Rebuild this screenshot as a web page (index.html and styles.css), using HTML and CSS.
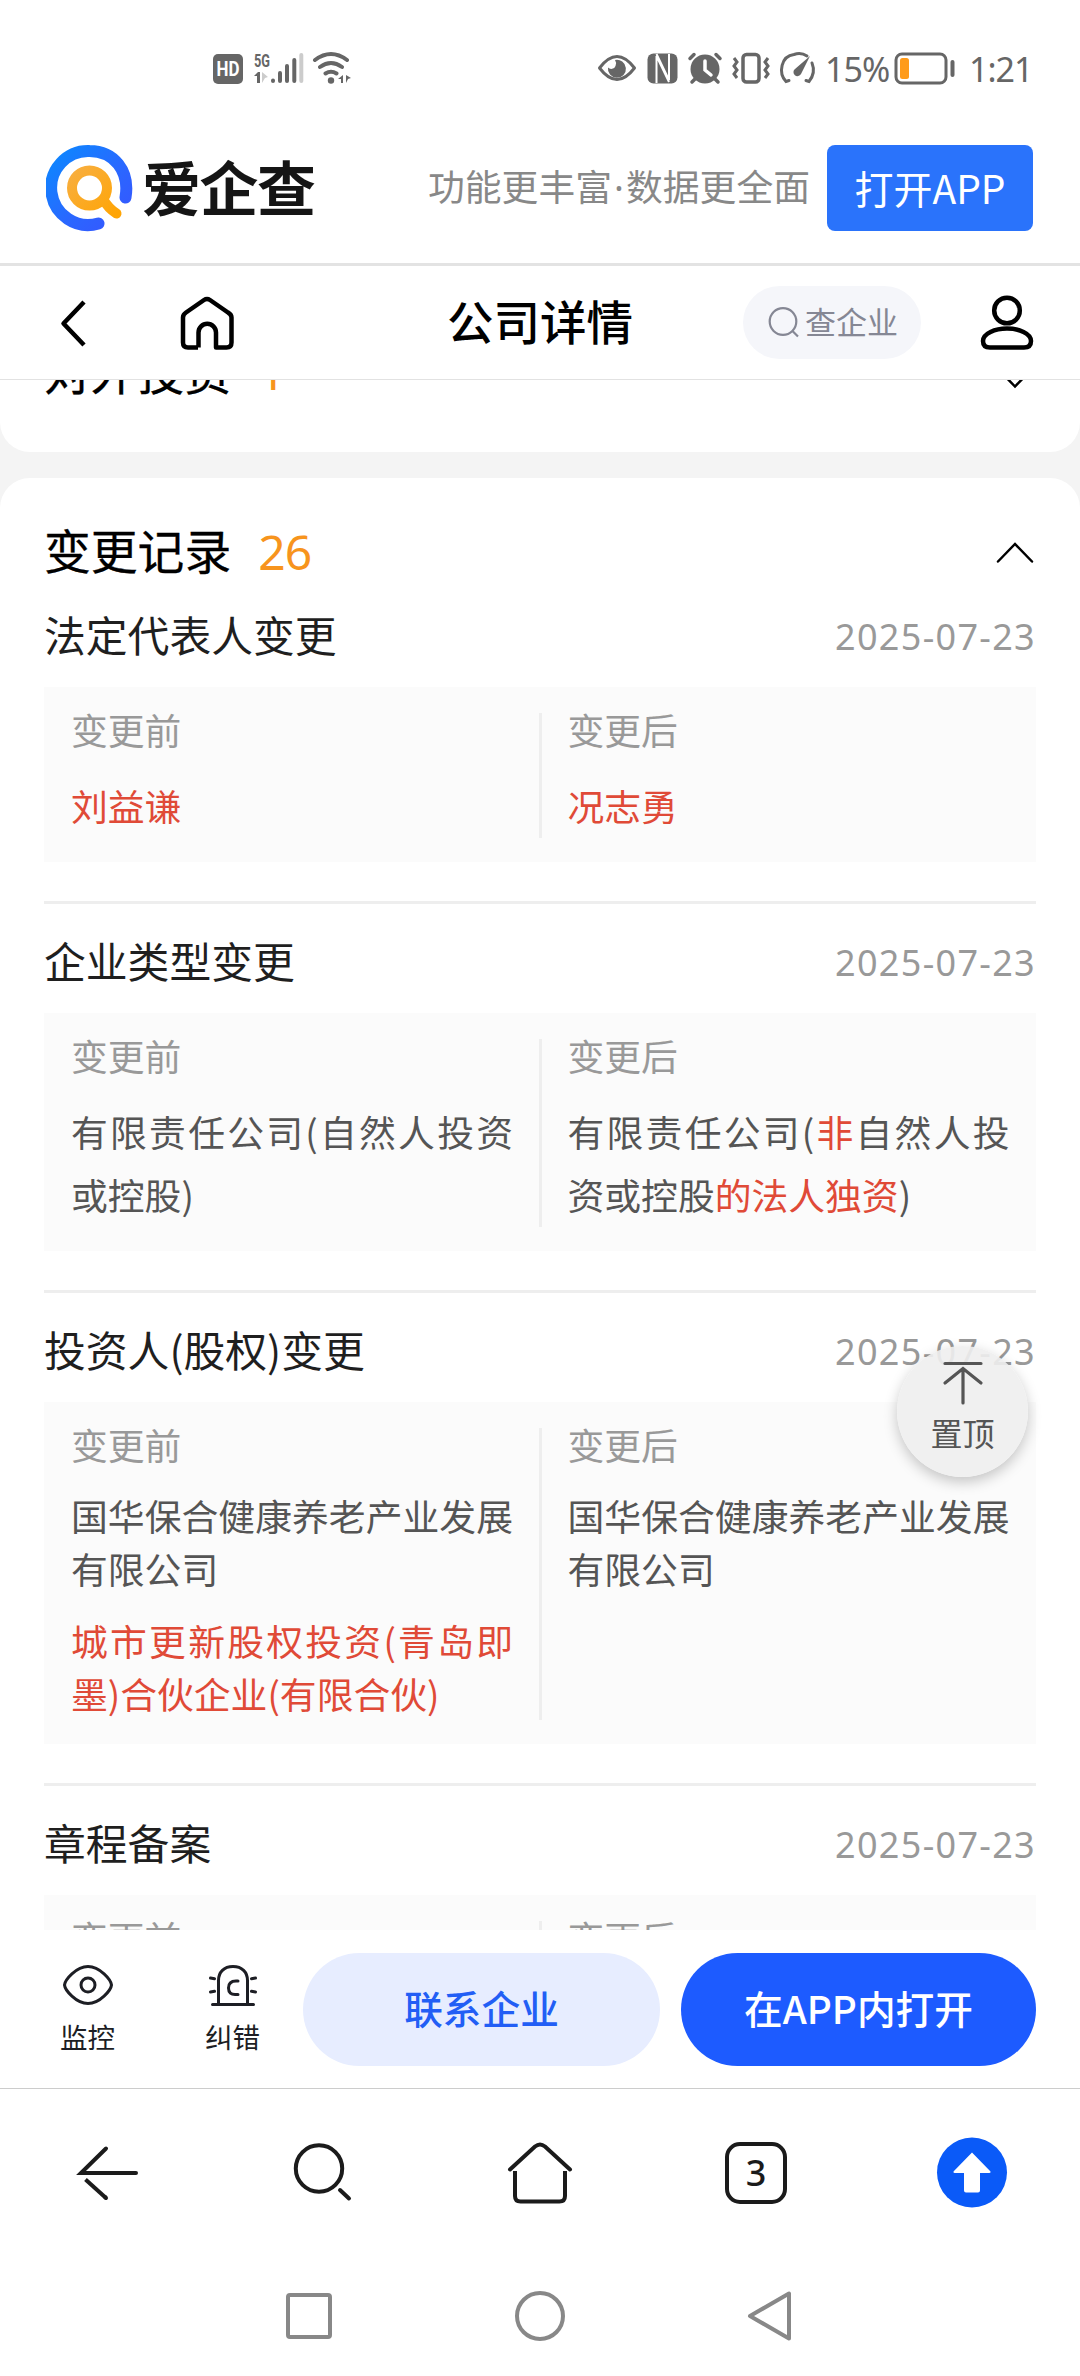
FILE: index.html
```html
<!DOCTYPE html>
<html lang="zh-CN">
<head>
<meta charset="utf-8">
<title>公司详情</title>
<link rel="stylesheet" href="styles.css">
</head>
<body>
<div class="screen">
  <header class="status">
    <svg class="status-left" width="144" height="40" viewBox="210 48 144 40">
      <rect x="213" y="54" width="30" height="30" rx="5" fill="#666"/>
      <text x="228" y="76" class="hd" text-anchor="middle" textLength="23" lengthAdjust="spacingAndGlyphs">HD</text>
      <text x="254" y="66.5" class="fiveg" textLength="16" lengthAdjust="spacingAndGlyphs">5G</text>
      <path d="M254 76l4-4h2v11h-3v-7z" fill="#666"/>
      <path d="M262 72l6 5-3 1-3 5z" fill="#ccc"/>
      <g stroke-width="4" stroke-linecap="round" stroke="#666"><path d="M273 80.5v.5M280 73v8M287 66v15M294.300 60v21"/><path d="M301.300 55v26" stroke="#ccc"/></g>
      <g fill="none" stroke="#666" stroke-width="4" stroke-linecap="round"><path d="M315 60Q331 48 347 60M320 67Q331 59 342 67M325.500 73.500Q331 70 336.500 73.500"/></g>
      <circle cx="331" cy="80.500" r="3.200" fill="#666"/>
      <path d="M338 79l5-4v8h-2v-4zM346 75l5 3-3 1-2 4z" fill="#666"/>
    </svg>
    <svg class="status-icons" width="222" height="40" viewBox="597 48 222 40" fill="none" stroke="#666">
      <path d="M600.500 68Q618 45 635.500 68Q618 91 600.500 68z" stroke-width="3" stroke-linejoin="round"/>
      <path d="M616 60a9 9 0 1 1-7 7.500a4.500 4.500 0 0 0 7.500-1.500a6 6 0 0 0-.5-6z" fill="#666" stroke="none"/>
      <rect x="648.500" y="53.500" width="30" height="30" rx="6" fill="#666" stroke="none"/>
      <path d="M657.500 83V56L670 82" stroke="#fff" stroke-width="2"/>
      <path d="M657.500 54L670 80V54" stroke="#fff" stroke-width="2"/>
      <circle cx="706" cy="69" r="14.500" fill="#666" stroke="none"/>
      <path d="M706 61v9l6 5" stroke="#fff" stroke-width="3.500" stroke-linecap="round"/>
      <path d="M691 58.500l4-4M717 54.500l4 4M697 78l-4 4M715 78l4 4" stroke-width="3.500" stroke-linecap="round"/>
      <rect x="744" y="54.500" width="16" height="27.500" rx="3.500" stroke-width="3.500"/>
      <path d="M735 58l3 4-3 4 3 4-3 4 3 4M769 58l-3 4 3 4-3 4 3 4-3 4" stroke-width="3"/>
      <path d="M790 80.500l-3 1C779 73 782 56 795 54.500Q802 52 808 56M813 63Q817 73 810 81.500l-3-1" stroke-width="3" stroke-linecap="round"/>
      <path d="M811 56L796 69a4 4 0 1 0 6 5z" fill="#666" stroke="none"/>
    </svg>
    <span class="status-text">15%</span>
    <svg class="battery" width="64" height="34" viewBox="894 51 64 34">
      <rect x="897" y="54" width="50" height="29" rx="6" fill="none" stroke="#666" stroke-width="3"/>
      <rect x="901" y="58" width="9" height="21" rx="2.500" fill="#ff9b1a"/>
      <rect x="951.500" y="60" width="4" height="17" rx="2" fill="#666"/>
    </svg>
    <span class="status-text">1:21</span>
  </header>

  <section class="promo">
    <svg class="logo" width="88" height="88" viewBox="0 0 88 88">
      <defs><linearGradient id="ring" x1="0" y1="0" x2="1" y2="1"><stop offset="0" stop-color="#0c88ff"/><stop offset=".6" stop-color="#2b66ff"/><stop offset="1" stop-color="#3656ff"/></linearGradient>
      <linearGradient id="lens" x1="0" y1="0" x2="1" y2="1"><stop offset="0" stop-color="#f8ae3e"/><stop offset="1" stop-color="#ffa505"/></linearGradient></defs>
      <path d="M79.500 53.500C84 27 68 7 43.500 7A37 37 0 1 0 52.500 79.500" fill="none" stroke="url(#ring)" stroke-width="12" stroke-linecap="round"/>
      <path d="M43.500 26.500a17.500 17.500 0 1 0 0 35a17.500 17.500 0 1 0 0-35M57 55Q62 64 70.500 69.500" fill="none" stroke="url(#lens)" stroke-width="10" stroke-linecap="round"/>
    </svg>
    <span class="brand">爱企查</span>
    <span class="slogan">功能更丰富<i class="dot">·</i>数据更全面</span>
    <a class="open-btn">打开APP</a>
  </section>

  <nav class="topnav">
    <svg class="back" width="32" height="52" viewBox="0 0 32 52" fill="none" stroke="#000" stroke-width="4.500" stroke-linejoin="round"><path d="M24 5L3.500 26.500L24 48"/></svg>
    <svg class="house" width="56" height="56" viewBox="0 0 56 56" fill="none" stroke="#000" stroke-width="4.500" stroke-linejoin="round"><path d="M19 52.500H9Q4 52.500 4 47.500V22.500Q4 19.500 7 17.500L25 5Q28 3 31 5L49 17.500Q52.500 19.500 52.500 22.500V47.500Q52.500 52.500 47.500 52.500H37V37.500A8.700 8.700 0 0 0 19.500 37.500V52.500"/></svg>
    <h1 class="title">公司详情</h1>
    <div class="search"><svg width="32" height="32" viewBox="0 0 32 32" fill="none" stroke="#858794" stroke-width="2.200"><circle cx="15" cy="14.500" r="13.300"/><path d="M24 23.500l6 6"/></svg><span>查企业</span></div>
    <svg class="user" width="54" height="56" viewBox="0 0 54 56" fill="none" stroke="#000" stroke-width="4.500"><circle cx="27" cy="15.500" r="12.800"/><path d="M27 33.500C15 33.500 3 38.500 3 46Q3 52.500 10 52.500H44Q51 52.500 51 46C51 38.500 39 33.500 27 33.500z"/></svg>
  </nav>

  <main class="content">
    <section class="card card-invest">
      <div class="card-head"><h2>对外投资</h2><em>1</em>
        <svg class="chev" width="38" height="22" viewBox="0 0 38 22" fill="none" stroke="#000" stroke-width="2.500" stroke-linecap="round"><path d="M2 2L19 19.500L36 2"/></svg></div>
    </section>
    <section class="card card-changes">
      <div class="card-head"><h2>变更记录</h2><em>26</em>
        <svg class="chev" width="38" height="22" viewBox="0 0 38 22" fill="none" stroke="#000" stroke-width="2.500" stroke-linecap="round"><path d="M2 19.500L19 2L36 19.500"/></svg></div>

      <article class="record">
        <div class="record-head"><h3>法定代表人变更</h3><time>2025-07-23</time></div>
        <div class="diff">
          <div class="side"><div class="label">变更前</div><p><b>刘益谦</b></p></div>
          <div class="side"><div class="label">变更后</div><p><b>况志勇</b></p></div>
        </div>
      </article>
      <article class="record">
        <div class="record-head"><h3>企业类型变更</h3><time>2025-07-23</time></div>
        <div class="diff">
          <div class="side"><div class="label">变更前</div><p>有限责任公司(自然人投资或控股)</p></div>
          <div class="side"><div class="label">变更后</div><p>有限责任公司(<b>非</b>自然人投资或控股<b>的法人独资</b>)</p></div>
        </div>
      </article>
      <article class="record">
        <div class="record-head"><h3>投资人(股权)变更</h3><time>2025-07-23</time></div>
        <div class="diff tight">
          <div class="side"><div class="label">变更前</div><p>国华保合健康养老产业发展有限公司</p><p><b>城市更新股权投资(青岛即墨)合伙企业(有限合伙)</b></p></div>
          <div class="side"><div class="label">变更后</div><p>国华保合健康养老产业发展有限公司</p></div>
        </div>
      </article>
      <article class="record">
        <div class="record-head"><h3>章程备案</h3><time>2025-07-23</time></div>
        <div class="diff">
          <div class="side"><div class="label">变更前</div></div>
          <div class="side"><div class="label">变更后</div></div>
        </div>
      </article>
    </section>
  </main>

  <section class="actions">
    <div class="act"><svg width="52" height="44" viewBox="0 0 52 44" fill="none" stroke="#1d1e24" stroke-width="3"><path d="M2.500 22C3 17 14 3.500 26 3.500S49 17 49.500 22C49 27 38 40.500 26 40.500S3 27 2.500 22z" stroke-linejoin="round"/><circle cx="26" cy="22" r="7"/></svg><span>监控</span></div>
    <div class="act"><svg width="52" height="44" viewBox="0 0 52 44" fill="none" stroke="#1d1e24" stroke-width="3" stroke-linecap="round"><path d="M11.500 41V17.500C11.500 9 17 3.500 26 3.500S40.500 9 40.500 17.500V41M5.500 41.500H46.500M31 18H29Q21.500 18 21.500 25T29 31.500H31M3.500 15l4 .7M3.500 29l4-.7M48.500 15l-4 .7M48.500 29l-4-.7"/></svg><span>纠错</span></div>
    <a class="pill pill-light">联系企业</a>
    <a class="pill pill-solid">在APP内打开</a>
  </section>

  <nav class="browser">
    <svg width="72" height="72" viewBox="0 0 72 72" fill="none" stroke="#1b1b1b" stroke-width="4" stroke-linecap="round"><path d="M34 11.500L9 36H64"/><path d="M13.500 42.500L34 61" stroke-linecap="butt"/><path d="M33 60L34 61"/></svg>
    <svg width="72" height="72" viewBox="0 0 72 72" fill="none" stroke="#1b1b1b" stroke-width="4" stroke-linecap="round"><circle cx="31" cy="31.500" r="23.200"/><path d="M52 53L61 61.500"/></svg>
    <svg width="72" height="72" viewBox="0 0 72 72" fill="none" stroke="#1b1b1b" stroke-width="4" stroke-linecap="round"><path d="M6 32.500L31 9.500Q36 5.500 41 9.500L66 32.500"/><path d="M11 34V59Q11 64.500 16.500 64.500H55.500Q61 64.500 61 59V34" stroke-linecap="butt"/></svg>
    <span class="tab-slot"><span class="tabs">3</span></span>
    <svg width="72" height="72" viewBox="0 0 72 72"><circle cx="36" cy="35.500" r="35" fill="#0a5af8"/><path d="M36 15.500L54.500 34.500Q55 36 53 36H44V53.500Q44 55.500 42 55.500H30Q28 55.500 28 53.500V36H19Q17 36 17.500 34.500z" fill="#fff"/></svg>
  </nav>

  <nav class="system">
    <svg width="56" height="56" viewBox="0 0 56 56" fill="none" stroke="#888" stroke-width="4"><rect x="7" y="7" width="42" height="42" rx="2"/></svg>
    <svg width="56" height="56" viewBox="0 0 56 56" fill="none" stroke="#888" stroke-width="4"><circle cx="28" cy="28" r="23"/></svg>
    <svg width="56" height="56" viewBox="0 0 56 56" fill="none" stroke="#888" stroke-width="4" stroke-linejoin="round"><path d="M7 28L46 5.500V50.500z"/></svg>
  </nav>

  <a class="to-top">
    <svg width="44" height="46" viewBox="0 0 44 46" fill="none" stroke="#555" stroke-width="3.200" stroke-linecap="round"><path d="M4 3.500H40M4 23L22 8.500L40 23M22 8.500V43"/></svg>
    <span>置顶</span>
  </a>
</div>
</body>
</html>
```
FILE: styles.css
```css
* { box-sizing: border-box; margin: 0; padding: 0; }
body {
  font-family: "Noto Sans CJK SC", sans-serif;
  background: #fff;
  color: #000;
}
svg { display: block; flex: none; }
.screen {
  position: relative;
  width: 1080px;
  height: 2376px;
  display: flex;
  flex-direction: column;
  overflow: hidden;
}

/* status bar */
.status { height: 136px; flex: none; display: flex; align-items: center; padding: 0 51px 0 210px; }
.status-icons { margin-left: auto; }
.status-text { font: 34px/40px "Noto Sans", sans-serif; color: #666; padding-top: 2px; letter-spacing: -1px; white-space: nowrap; }
.status-icons + .status-text { width: 67px; margin-left: 7px; }
.battery { margin: 0 12px 0 1px; }
.battery + .status-text { width: 60px; }
.hd { font: 700 20px Roboto, sans-serif; fill: #fff; }
.fiveg { font: 700 19px Roboto, sans-serif; fill: #666; }

/* app promotion */
.promo { height: 130px; flex: none; display: flex; align-items: center; padding: 0 47px 23px 46px; border-bottom: 3px solid #e3e3e3; }
.brand { margin: -5px 0 0 8px; font-size: 59px; line-height: 80px; font-weight: 700; letter-spacing: -1.500px; color: #151515; }
.slogan { margin: -5px 0 0 auto; font-size: 36.800px; line-height: 50px; color: #888; white-space: nowrap; }
.dot { display: inline-block; width: 14px; text-align: center; font-style: normal; font-family: "Noto Sans", sans-serif; }
.open-btn { margin-left: 17px; width: 206px; height: 86px; border-radius: 8px; background: #2a73fb; color: #fff; font-size: 39px; line-height: 84px; text-align: center; }

/* page navigation */
.topnav { height: 114px; flex: none; display: flex; align-items: center; padding: 0 46px 0 60px; border-bottom: 1px solid #e2e2e2; }
.house { margin-left: 87px; }
.title { margin: -6px 0 0 212px; width: 186px; font-size: 46.500px; line-height: 60px; font-weight: 500; white-space: nowrap; }
.search { margin-left: 110px; width: 178px; height: 73px; border-radius: 37px; background: #f5f6fa; display: flex; align-items: center; padding-left: 25px; gap: 5px; font-size: 31px; line-height: 40px; color: #858794; }
.search span { margin-top: -3px; }
.user { margin-left: 59px; }

/* scrolled content */
.content { height: 1550px; flex: none; overflow: hidden; background: #f4f4f4; }
.card { background: #fff; padding: 0 44px; }
.card-invest { height: 72px; overflow: hidden; border-radius: 0 0 30px 30px; margin-bottom: 26px; }
.card-changes { border-radius: 30px 30px 0 0; padding-top: 41px; }
.card-head { display: flex; align-items: center; height: 64px; padding: 0 2px 0 0; }
.card-invest .card-head { margin-top: -40px; }
.card-head h2 { margin-top: -5px; font-size: 46.800px; line-height: 60px; font-weight: 400; -webkit-text-stroke: .3px; }
.card-head em { margin: 1px 0 0 27px; font-style: normal; font-family: "Noto Sans", sans-serif; font-size: 48px; line-height: 60px; color: #f7941d; letter-spacing: -.8px; }
.card-invest .card-head em { margin-top: 0; }
.chev { margin: 3px 0 0 auto; }
.card-invest .chev { margin-top: 11px; }
.record-head { height: 104px; display: flex; align-items: center; justify-content: space-between; padding-bottom: 3px; }
.record + .record .record-head { height: 109px; padding: 6px 0 4px; }
.record + .record { margin-top: 39px; border-top: 3px solid #eee; }
.record-head h3 { font-size: 41.800px; line-height: 60px; font-weight: 400; color: #1f1f1f; }
.record-head time { margin-top: 7px; font-family: "Noto Sans", sans-serif; font-size: 36px; line-height: 50px; color: #999; letter-spacing: 1.300px; }
.diff { display: flex; background: #fbfbfb; padding: 26px 0 24px; }
.side { flex: 1 1 0; padding: 0 26px 0 27px; }
.side + .side { border-left: 3px solid #eee; margin-left: -1px; padding: 0 26px; }
.label { height: 61px; font-size: 36.800px; line-height: 32px; color: #999; }
.side p { width: 442px; font-size: 36.800px; line-height: 63px; color: #555; text-align: justify; }
.side p:last-child { margin-bottom: 1px; }
.side b { font-weight: 400; color: #e04a37; }
.tight p { line-height: 52.500px; }
.tight p + p { margin-top: 20px; }

/* bottom actions */
.actions { height: 158px; flex: none; display: flex; align-items: center; padding: 0 44px 0 42px; }
.act { width: 91px; display: flex; flex-direction: column; align-items: center; font-size: 27.500px; line-height: 36px; color: #1d1e24; gap: 11px; margin-top: -2px; }
.act + .act { margin-left: 54px; }
.pill { height: 113px; border-radius: 57px; text-align: center; font-size: 38.700px; line-height: 108px; font-weight: 500; }
.pill-light { width: 357px; margin-left: 25px; background: #e7edff; color: #225ef5; }
.pill-solid { width: 355px; margin-left: auto; background: #1d5bff; color: #fff; }

/* browser toolbar */
.browser { height: 170px; flex: none; border-top: 1px solid #ccc; display: flex; justify-content: space-between; align-items: center; padding: 0 72px 2px; }
.tab-slot { width: 72px; display: flex; justify-content: center; }
.tabs { width: 62px; height: 62px; border: 4px solid #1b1b1b; border-radius: 15px; text-align: center; font: 500 36px/54px "Noto Sans", sans-serif; color: #1b1b1b; }

/* system keys */
.system { height: 118px; flex: none; display: flex; justify-content: center; gap: 175px; padding-top: 30px; }

/* floating button */
.to-top { position: absolute; left: 897px; top: 1346px; width: 131px; height: 131px; border-radius: 50%; background: rgba(238,238,238,.9); box-shadow: 0 5px 14px rgba(0,0,0,.22); display: flex; flex-direction: column; align-items: center; padding-top: 14px; font-size: 32px; line-height: 40px; color: #555; gap: 6px; }
```
